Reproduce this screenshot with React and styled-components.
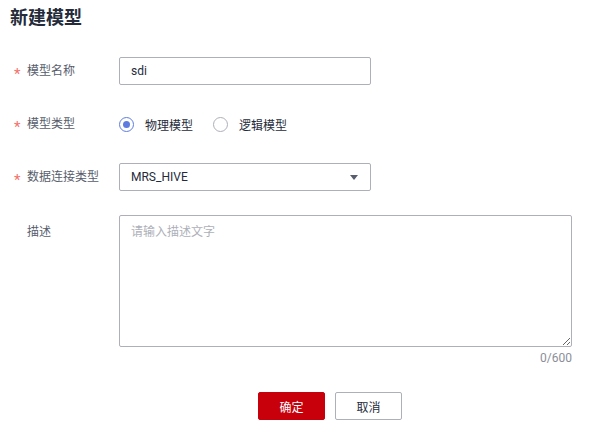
import React from "react";
import styled, { createGlobalStyle } from "styled-components";

const GlobalStyle = createGlobalStyle`
  html, body {
    margin: 0;
    padding: 0;
    background: #ffffff;
  }
  body {
    font-family: Roboto, "Noto Sans CJK SC", sans-serif;
    color: #252b3a;
  }
  * { box-sizing: border-box; }
`;

const Page = styled.div`
  width: 608px;
  padding: 6px 0 0 10px;
`;

const Title = styled.h1`
  margin: 0;
  font-size: 18px;
  line-height: 24px;
  font-weight: 700;
  color: #252b3a;
`;

const Form = styled.div`
  margin-top: 27px;
  padding-left: 4px;
  display: flex;
  flex-direction: column;
  gap: 25px;
`;

const Row = styled.div`
  display: flex;
  align-items: ${(p) => (p.$top ? "flex-start" : "center")};
  min-height: 28px;
  margin-top: ${(p) => (p.$top ? "-1px" : "0")};
`;

const Label = styled.div`
  width: 105px;
  flex: none;
  display: flex;
  align-items: center;
  font-size: 12px;
  line-height: 18px;
  color: #575d6c;
  padding-top: ${(p) => (p.$top ? "8px" : "0")};
`;

const Star = styled.span`
  display: inline-block;
  width: 13px;
  color: #f66f6a;
  font-size: 15px;
  transform: translateY(3px);
`;

const Field = styled.div`
  width: 252px;
  height: 28px;
  border: 1px solid #adb0b8;
  border-radius: 2px;
  padding: 0 11px;
  display: flex;
  align-items: center;
  justify-content: space-between;
  font-size: 12px;
  color: #252b3a;
`;

const Caret = styled.span`
  width: 0;
  height: 0;
  border-left: 4.5px solid transparent;
  border-right: 4.5px solid transparent;
  border-top: 5px solid #575d6c;
  margin-right: 1px;
`;

const RadioGroup = styled.div`
  display: flex;
  align-items: center;
  gap: 20px;
`;

const RadioItem = styled.label`
  display: flex;
  align-items: center;
  gap: 11px;
  font-size: 12px;
  color: #252b3a;
`;

const RadioDot = styled.span`
  width: 15px;
  height: 15px;
  border-radius: 50%;
  border: 1px solid ${(p) => (p.$on ? "#5e7ce0" : "#adb0b8")};
  display: flex;
  align-items: center;
  justify-content: center;
  &::after {
    content: "";
    width: 7px;
    height: 7px;
    border-radius: 50%;
    background: ${(p) => (p.$on ? "#5e7ce0" : "transparent")};
  }
`;

const AreaWrap = styled.div`
  display: flex;
  flex-direction: column;
  align-items: flex-end;
`;

const TextArea = styled.textarea`
  width: 453px;
  height: 132px;
  border: 1px solid #adb0b8;
  border-radius: 2px;
  padding: 7px 11px;
  font-family: Roboto, "Noto Sans CJK SC", sans-serif;
  font-size: 12px;
  line-height: 18px;
  color: #252b3a;
  outline: none;
  display: block;
  &::placeholder {
    color: #adb0b8;
  }
`;

const Counter = styled.div`
  margin-top: 2px;
  font-size: 12px;
  line-height: 18px;
  color: #8a8e99;
`;

const Actions = styled.div`
  margin-top: 25px;
  padding-left: 248px;
  display: flex;
  gap: 10px;
`;

const Button = styled.button`
  width: 67px;
  height: 28px;
  border-radius: 2px;
  font-family: Roboto, "Noto Sans CJK SC", sans-serif;
  font-size: 12px;
  cursor: pointer;
  border: 1px solid ${(p) => (p.$primary ? "#c7000b" : "#adb0b8")};
  background: ${(p) => (p.$primary ? "#c7000b" : "#ffffff")};
  color: ${(p) => (p.$primary ? "#ffffff" : "#252b3a")};
`;

export default function App() {
  return (
    <Page>
      <GlobalStyle />
      <Title>新建模型</Title>
      <Form>
        <Row>
          <Label><Star>*</Star>模型名称</Label>
          <Field>sdi</Field>
        </Row>
        <Row>
          <Label><Star>*</Star>模型类型</Label>
          <RadioGroup>
            <RadioItem><RadioDot $on />物理模型</RadioItem>
            <RadioItem><RadioDot />逻辑模型</RadioItem>
          </RadioGroup>
        </Row>
        <Row>
          <Label><Star>*</Star>数据连接类型</Label>
          <Field>MRS_HIVE<Caret /></Field>
        </Row>
        <Row $top>
          <Label $top><Star />描述</Label>
          <AreaWrap>
            <TextArea placeholder="请输入描述文字" />
            <Counter>0/600</Counter>
          </AreaWrap>
        </Row>
      </Form>
      <Actions>
        <Button $primary>确定</Button>
        <Button>取消</Button>
      </Actions>
    </Page>
  );
}
